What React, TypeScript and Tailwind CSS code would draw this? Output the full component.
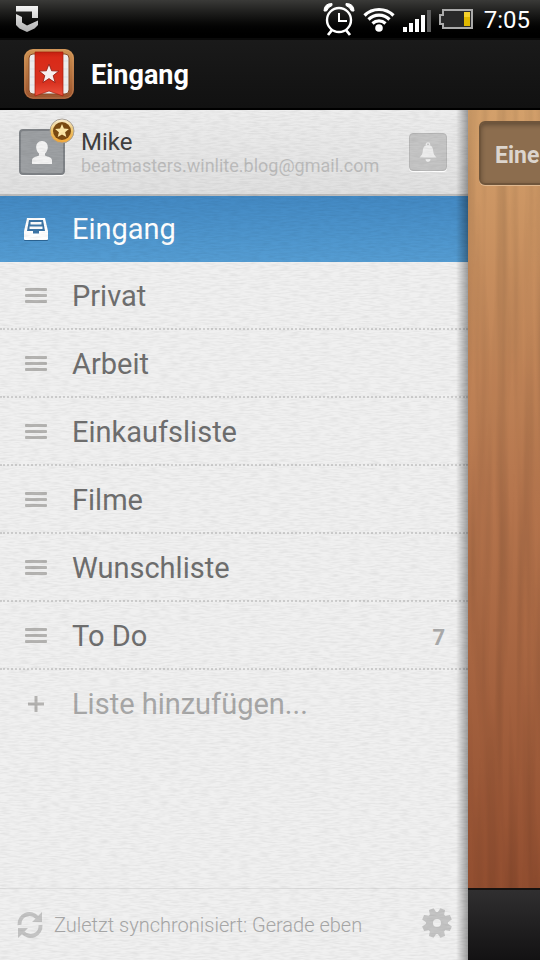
import { ReactNode } from "react"
import clsx from "clsx"

const lists = [
  { name: "Privat" },
  { name: "Arbeit" },
  { name: "Einkaufsliste" },
  { name: "Filme" },
  { name: "Wunschliste" },
  { name: "To Do", count: 7 },
]

function Grain({ id, frequency, className }: { id: string; frequency: string; className: string }) {
  return (
    <svg aria-hidden="true" className={clsx("pointer-events-none absolute inset-0 h-full w-full", className)}>
      <filter id={id}>
        <feTurbulence type="fractalNoise" baseFrequency={frequency} numOctaves="2" seed="4" />
        <feColorMatrix values="0 0 0 0 0  0 0 0 0 0  0 0 0 0 0  2 0 0 0 -0.7" />
      </filter>
      <rect width="100%" height="100%" filter={`url(#${id})`} />
    </svg>
  )
}

function StatusBar() {
  return (
    <div className="flex h-[38px] items-center bg-linear-to-b from-[#3a3a38] to-black pr-[10px] pl-4 text-white">
      <svg width="22" height="26" viewBox="0 0 22 26" className="mr-auto">
        <defs>
          <linearGradient id="shield" gradientUnits="userSpaceOnUse" x1="0" y1="0" x2="0" y2="26">
            <stop stopColor="#f4f4f4" />
            <stop offset="1" stopColor="#b0b0b0" />
          </linearGradient>
        </defs>
        <path d="M0 0h22v12h-6V5.500H0z" fill="url(#shield)" />
        <path d="M0 8l6 3v5.500l5 3 11-5V19l-3.500 3.500L11 26l-7.500-3.500L0 19z" fill="url(#shield)" />
      </svg>
      <svg width="32" height="34" viewBox="0 0 32 34" fill="none" stroke="#fff" className="mr-2">
        <circle cx="16" cy="18" r="12" strokeWidth="2.4" />
        <path d="M16 11v8h8" strokeWidth="2" />
        <path d="M9 28l-4 5M23 28l4 5" strokeWidth="2.800" />
        <path d="M1 9Q1 1.500 9 1.500L9 3.500Q5 5 3.500 9zM31 9Q31 1.500 23 1.500L23 3.500Q27 5 28.500 9z" fill="#fff" strokeWidth="1" />
      </svg>
      <svg width="32" height="26" viewBox="0 0 32 26" fill="none" stroke="#fff" strokeWidth="3.200" className="mr-2">
        <path d="M1.500 9.500A20.500 20.500 0 0 1 30.500 9.500M5.500 13.500A15 15 0 0 1 26.500 13.500M9.500 17.500A9.500 9.500 0 0 1 22.500 17.500" />
        <circle cx="16" cy="22" r="3.800" fill="#fff" stroke="none" />
      </svg>
      <svg width="28" height="22" viewBox="0 0 28 22" fill="#fff" className="mt-1 mr-2">
        <path d="M0 17h4v5H0zM6 13h4v9H6zM12 9h4v13h-4zM18 5h4v17h-4z" />
        <path d="M24 0h4v22h-4z" fill="#5c5c5c" />
      </svg>
      <svg width="34" height="20" viewBox="0 0 34 20" className="mr-[11px]">
        <path d="M4 1h29v18H4v-4H1V6h3z" fill="#292929" stroke="#aaa" strokeWidth="2" />
        <path d="M25 3h6v14h-6z" fill="#e0b800" />
        <path d="M25 3h6v5h-6z" fill="#f6d22c" />
      </svg>
      <span className="pt-[2px] text-[24px] leading-none">7:05</span>
    </div>
  )
}

function AppLogo() {
  return (
    <svg width="50" height="50" viewBox="0 0 50 50">
      <defs>
        <linearGradient id="frame" x2="0" y2="1">
          <stop stopColor="#cf9352" />
          <stop offset="1" stopColor="#9b532d" />
        </linearGradient>
        <linearGradient id="ribbon" x2="0" y2="1">
          <stop stopColor="#c3200f" />
          <stop offset=".12" stopColor="#d92a18" />
          <stop offset=".7" stopColor="#d93220" />
          <stop offset="1" stopColor="#ee5440" />
        </linearGradient>
      </defs>
      <rect width="50" height="50" rx="9" fill="url(#frame)" />
      <rect x="1" y="1" width="48" height="48" rx="8" fill="none" stroke="#e0a878" strokeOpacity=".35" />
      <rect x="5" y="5" width="40" height="40" rx="4" fill="#ececec" stroke="#8a4c28" />
      <path d="M6 12h38M6 20h38M6 28h38M6 36h38" stroke="#dadfe4" />
      <path d="M11 3h28v44l-14-5-14 5z" fill="url(#ribbon)" stroke="#a81c0d" strokeWidth=".7" />
      <path
        d="M25 15l2.600 6.800 7.200.3-5.600 4.500 1.900 7L25 29.600l-6.100 4 1.900-7-5.600-4.500 7.200-.3z"
        fill="#f7eeee"
        stroke="#8d170c"
        strokeWidth=".8"
      />
    </svg>
  )
}

function Avatar() {
  return (
    <div className="relative size-[46px] rounded-[4px] border-2 border-[#808488] bg-[#9da0a3] shadow-[0_1px_0_#fff]">
      <svg viewBox="0 0 42 42" className="size-full">
        <path
          d="M21 10c4 0 6 3 5.800 6.500-.2 3-1.500 5-2.800 6v2c3 1.500 7 1.600 7 5V33H11v-3.500c0-3.400 4-3.500 7-5v-2c-1.300-1-2.600-3-2.800-6C15 13 17 10 21 10z"
          fill="#f3f3f3"
        />
      </svg>
      <svg viewBox="0 0 26 26" className="absolute -top-[13px] -right-[12px] size-[26px]">
        <defs>
          <linearGradient id="coin" x2="0" y2="1">
            <stop stopColor="#fff6dc" />
            <stop offset=".5" stopColor="#f0c466" />
            <stop offset="1" stopColor="#f5a93a" />
          </linearGradient>
        </defs>
        <circle cx="13" cy="13" r="12" fill="url(#coin)" stroke="#a9a198" />
        <circle cx="13" cy="13" r="9" fill="#7a4a12" />
        <path d="M13 6l1.900 4.600 5 .4-3.800 3.200 1.200 4.800L13 16.400 8.700 19l1.200-4.800L6.100 11l5-.4z" fill="#ffe9a8" />
      </svg>
    </div>
  )
}

function InboxIcon() {
  return (
    <svg width="24" height="24" viewBox="0 0 24 24" className="drop-shadow-[0_1px_0_#2c6696]">
      <path d="M3 1h18l3 13v8q0 1-1 1H1q-1 0-1-1v-8z" fill="#fff" />
      <path d="M5 3h14l2 11h-6v2.500H9V14H3z" fill="#3d75a5" />
      <path d="M6.500 5h11v2.500h-11zM5.500 9.500h13V12h-13z" fill="#fff" />
    </svg>
  )
}

function HandleIcon() {
  return (
    <svg width="24" height="18" viewBox="0 0 24 18" fill="#b5b4b2">
      <rect x="1" y="1" width="22" height="3" rx="1" />
      <rect x="1" y="7" width="22" height="3" rx="1" />
      <rect x="1" y="13" width="22" height="3" rx="1" />
    </svg>
  )
}

function ListRow({ icon, className, children }: { icon: ReactNode; className?: string; children: ReactNode }) {
  return (
    <button className={clsx("flex w-full items-center pr-[23px] pl-6 text-left text-[29px] leading-9", className)}>
      <span className="flex w-12 shrink-0 items-center">{icon}</span>
      {children}
    </button>
  )
}

function Sidebar() {
  return (
    <aside className="relative flex min-w-0 flex-1 flex-col bg-[#f0f0f0]">
      <div className="flex h-[86px] items-center gap-4 border-b-2 border-[#bcbcbc] bg-linear-to-b from-[#ededed] to-[#e0e0e0] pr-[21px] pl-[19px]">
        <Avatar />
        <div className="min-w-0 flex-1">
          <div className="text-[24px] leading-7 text-[#404040]">Mike</div>
          <div className="text-[18px] leading-5 whitespace-nowrap text-[#bdbdbd]">beatmasters.winlite.blog@gmail.com</div>
        </div>
        <button
          aria-label="Benachrichtigungen"
          className="flex size-[38px] items-center justify-center rounded-[4px] border border-[#b8b8b8] bg-[#c5c5c5] shadow-[0_1px_0_#fff]"
        >
          <svg width="18" height="20" viewBox="0 0 18 20" fill="#ececec">
            <circle cx="9" cy="2.500" r="1.700" fill="none" stroke="#ececec" strokeWidth="1.200" />
            <path d="M9 3c4 0 5 3 5.200 6 .2 3 1.300 4.500 3.300 6.500H.5C2.500 13.500 3.600 12 3.800 9 4 6 5 3 9 3zM6.500 17h5c0 4-5 4-5 0z" />
          </svg>
        </button>
      </div>
      <nav>
        <ListRow icon={<InboxIcon />} className="h-[66px] bg-linear-to-b from-[#4389c3] to-[#559dd3] text-white">
          Eingang
        </ListRow>
        {lists.map((list) => (
          <ListRow
            key={list.name}
            icon={<HandleIcon />}
            className="h-[68px] border-b-2 border-dotted border-[#cfcfcf] pt-[2px] text-[#6f6f6f]"
          >
            {list.name}
            {list.count && <span className="ml-auto pt-1 text-[22px] font-bold text-[#ababab]">{list.count}</span>}
          </ListRow>
        ))}
        <ListRow
          icon={
            <svg width="24" height="16" viewBox="0 0 24 16" stroke="#b5b4b2" strokeWidth="3">
              <path d="M4 8h16M12 0v16" />
            </svg>
          }
          className="h-[68px] text-[#a8a8a8]"
        >
          Liste hinzufügen...
        </ListRow>
      </nav>
      <footer className="mt-auto flex h-[72px] items-center border-t border-[#dedede] pr-4 pl-[17px]">
        <button aria-label="Synchronisieren" className="mr-[11px]">
          <svg width="26" height="28" viewBox="0 0 26 28" fill="none" stroke="#c4c4c4" strokeWidth="4">
            <path d="M2.500 14A10 10 0 0 1 20 6.500M23.500 14A10 10 0 0 1 6 21.500" />
            <path d="M25 1v10H15zM1 27V17h10z" fill="#c4c4c4" stroke="none" />
          </svg>
        </button>
        <span className="text-[20px] font-light whitespace-nowrap text-[#a8a8a8]">Zuletzt synchronisiert: Gerade eben</span>
        <button aria-label="Einstellungen" className="ml-auto pb-1">
          <svg width="30" height="30" viewBox="-15 -15 30 30" fill="#c5c5c5">
            <circle r="7.500" fill="none" stroke="#c5c5c5" strokeWidth="7" />
            {[22.5, 67.5, 112.5, 157.5, 202.5, 247.5, 292.5, 337.5].map((angle) => (
              <path key={angle} d="M-3.500-10l1-5h5l1 5z" transform={`rotate(${angle})`} />
            ))}
          </svg>
        </button>
      </footer>
      <Grain id="paper" frequency="0.1 0.6" className="opacity-5" />
      <div className="pointer-events-none absolute inset-y-0 right-0 w-3 bg-linear-to-r from-transparent to-black/35" />
    </aside>
  )
}

function TaskPane() {
  return (
    <main className="flex w-[72px] shrink-0 flex-col overflow-hidden">
      <div className="relative flex-1 bg-linear-to-b from-[#d3a06b] via-[#b5754d] to-[#924e30]">
        <Grain id="wood" frequency="0.1 0.004" className="opacity-10" />
        <div className="relative pt-[11px] pl-[11px]">
          <input
            aria-label="Neue Aufgabe"
            placeholder="Eine"
            className="h-16 w-24 rounded-[6px] border-2 border-[#6f553b] bg-[#8c6d4e] px-[14px] pt-1 text-[23px] font-bold shadow-[inset_0_2px_5px_#0000004d,0_1px_0_#e0b88f] placeholder:text-[#dcd5cd]"
          />
        </div>
      </div>
      <div className="h-[72px] border-t-2 border-[#171210] bg-linear-to-b from-[#302f30] to-[#131213]" />
    </main>
  )
}

export default function App() {
  return (
    <div className="flex min-h-screen flex-col bg-black font-['Roboto',sans-serif]">
      <StatusBar />
      <header className="flex h-[72px] items-center gap-[17px] border-y-2 border-t-[#0a0a0a] border-b-black bg-linear-to-b from-[#1a1a1a] to-[#111] pl-6">
        <AppLogo />
        <h1 className="pt-[2px] text-[27px] font-bold text-white">Eingang</h1>
      </header>
      <div className="flex flex-1">
        <Sidebar />
        <TaskPane />
      </div>
    </div>
  )
}
